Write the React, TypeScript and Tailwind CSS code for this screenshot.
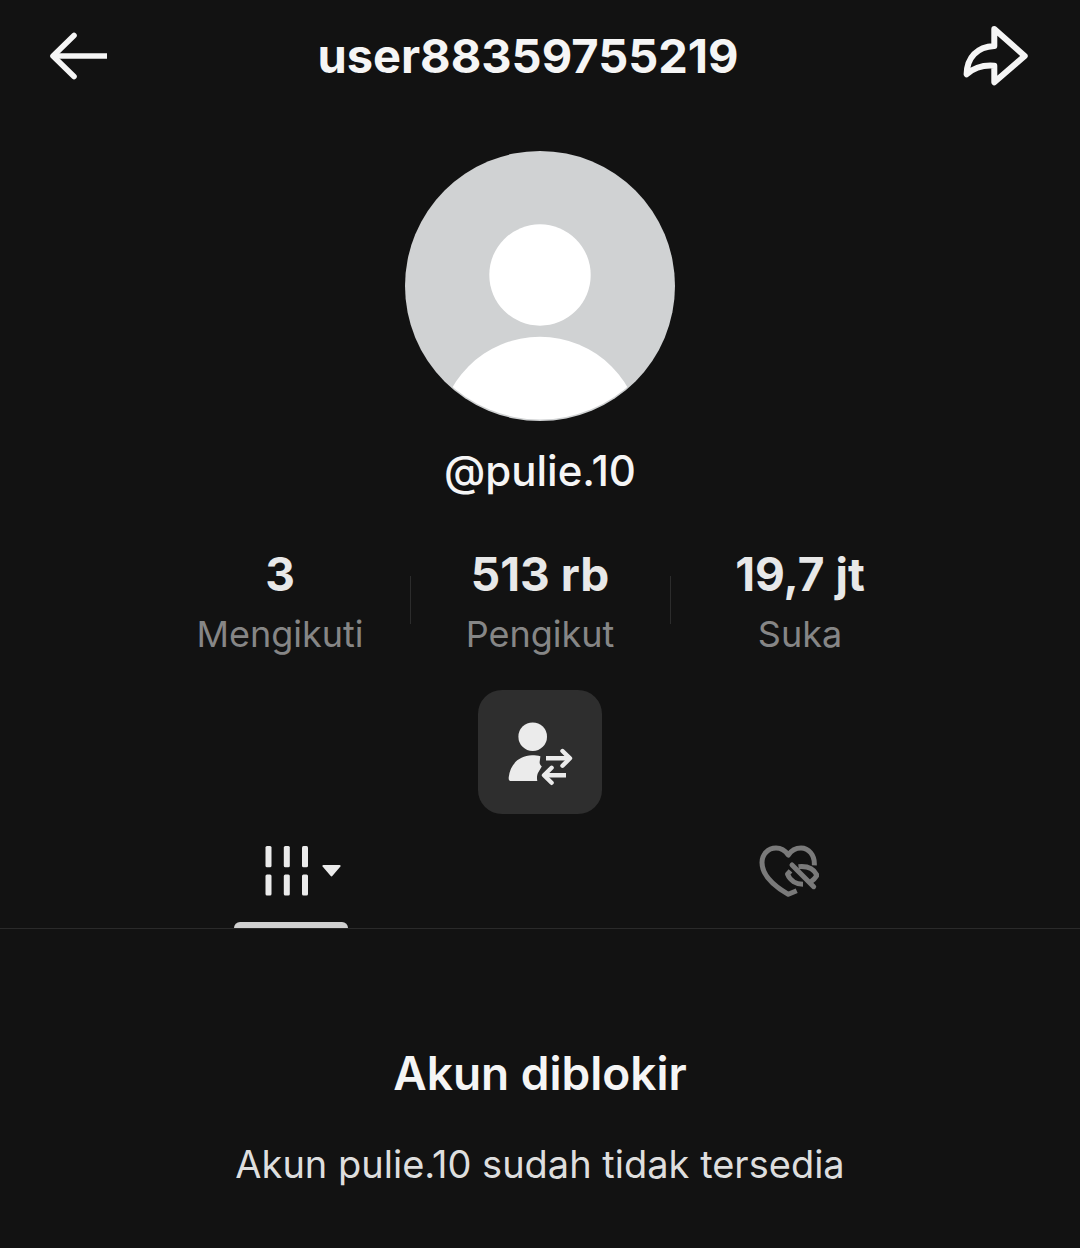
import { useState } from "react"

const stats = [
    { value: "3", label: "Mengikuti" },
    { value: "513 rb", label: "Pengikut" },
    { value: "19,7 jt", label: "Suka" },
]

function BackIcon() {
    return <svg width="60" height="60" viewBox="0 0 60 60" fill="none" stroke="currentColor" strokeWidth="5.6" strokeLinejoin="round" aria-hidden="true">
        <path d="M26 9.5 5 30l21 20.5" strokeLinecap="round" />
        <path d="M6 30h53" />
    </svg>
}

function ShareIcon() {
    return <svg width="68" height="64" viewBox="0 0 68 64" fill="none" stroke="currentColor" strokeWidth="6" strokeLinejoin="round" className="overflow-visible" aria-hidden="true">
        <path d="M30.3 5 60.7 32 30.3 58.3V41.7C19 40.8 10 43.6 2.6 50.3 3 33.5 13 22.8 30.3 22Z" />
    </svg>
}

function Avatar() {
    return <svg className="size-[270px]" viewBox="0 0 270 270" role="img" aria-label="pulie.10">
        <clipPath id="avatar">
            <circle cx="135" cy="135" r="133.5" />
        </clipPath>
        <circle cx="135" cy="135" r="135" fill="#d0d2d3" />
        <circle cx="135" cy="124" r="50.7" fill="#fff" />
        <circle cx="135" cy="287" r="101.2" fill="#fff" clipPath="url(#avatar)" />
    </svg>
}

function SuggestIcon() {
    return <svg width="64" height="64" viewBox="0 0 64 64" className="overflow-visible" aria-hidden="true">
        <circle cx="24.7" cy="16.7" r="14.3" fill="currentColor" />
        <path fill="currentColor" d="M24 35.3C11 35.5 2 44.5.7 57.5.5 60 1.3 61 3.5 61H29.3C28.6 57.5 29 54.5 30.5 52L33.8 46.5C32 45 31.3 43 31.8 41L32.4 36.2C30 35.5 27 35.3 24 35.3Z" />
        <g fill="none" stroke="currentColor" strokeWidth="4.4" strokeLinejoin="round">
            <path d="M38 38.3H61M58 55.3H37" />
            <path d="M54.5 31 62 38.3 54.5 45.7M43.6 47.8 36 55.3 43.6 62.8" strokeLinecap="round" />
        </g>
    </svg>
}

function GridIcon() {
    return <svg width="44" height="50" viewBox="0 0 44 50" fill="currentColor" aria-hidden="true">
        {[0.5, 18.8, 37].map(x => <g key={x}>
            <rect x={x} y="0" width="6" height="21.3" rx="1.5" />
            <rect x={x} y="28.5" width="6" height="21" rx="1.5" />
        </g>)}
    </svg>
}

function LikedIcon() {
    return <svg width="60" height="60" viewBox="0 0 60 60" fill="none" stroke="currentColor" strokeWidth="5" strokeLinejoin="round" aria-hidden="true">
        <path d="M55.3 24.3C56 14 49.5 7 42 7 36.5 7 32 10 29.3 14 26.5 10 22 7 17 7 9 7 3 13.5 3 21.5 3 34.5 15 45 29.3 53.3L37.7 49.7" />
        <path d="M33 24 54.7 45.7" strokeLinecap="round" />
        <path d="M31.5 29.8 28.5 33.2C31 39.5 37 43.2 44 43.2" />
        <path d="M39.5 25.7C48.5 24.8 55 28 58 34.3 56.5 37 54.5 39 51.5 41" />
    </svg>
}

export default function App() {
    const [tab, tabSet] = useState("videos")
    return <main className="min-h-screen bg-[#121212] font-['Inter',sans-serif] text-[#f5f5f5]">
        <header className="flex h-28 items-center px-12">
            <button type="button" aria-label="Kembali" className="flex w-[60px] items-center"><BackIcon /></button>
            <h1 className="flex-1 text-center text-[47px] leading-14 font-bold">user88359755219</h1>
            <button type="button" aria-label="Bagikan" className="flex w-[84px] items-center justify-end"><ShareIcon /></button>
        </header>

        <section className="flex flex-col items-center pt-[39px]">
            <Avatar />
            <p className="mt-6 text-[42px] leading-[52px] font-medium">@pulie.10</p>
            <ul className="mt-[47px] flex text-center">
                {stats.map((s, i) => <li key={s.label} className="flex">
                    {i > 0 && <span className="mt-8 h-12 w-px bg-[#2c2c2c]" />}
                    <a href="#" className="block w-[259px]">
                        <strong className="block text-[46px] leading-[60px] font-bold text-[#e8e8e8]">{s.value}</strong>
                        <span className="block text-[36px] leading-[60px] text-[#868686]">{s.label}</span>
                    </a>
                </li>)}
            </ul>
            <button type="button" aria-label="Akun yang disarankan" className="mt-[26px] flex size-[124px] items-center justify-center rounded-3xl bg-[#2e2e2e] text-[#ebebeb]">
                <SuggestIcon />
            </button>
        </section>

        <nav className="flex border-b border-[#2a2a2a] px-[42px]">
            <button type="button" aria-label="Video" onClick={() => tabSet("videos")} className="flex h-[114px] flex-1 flex-col items-center justify-end pt-[6px] text-[#ebebeb]">
                <span className="flex w-[114px] flex-1 items-center justify-end gap-[13px] pr-[7px]">
                    <GridIcon />
                    <svg width="19" height="12" viewBox="0 0 19 12" fill="currentColor" aria-hidden="true">
                        <path d="M1.5 0H17.5Q19.5.5 18 2L10.5 10.8Q9.5 12 8.5 10.8L1 2Q-.5.5 1.5 0Z" />
                    </svg>
                </span>
                <span className={tab === "videos" ? "h-[6px] w-[114px] rounded-t-md bg-[#d0d0d0]" : "h-[6px] w-[114px]"} />
            </button>
            <button type="button" aria-label="Disukai" onClick={() => tabSet("liked")} className="flex h-[114px] flex-1 flex-col items-center justify-end pt-[6px] text-[#7a7a7a]">
                <span className="flex flex-1 items-center"><LikedIcon /></span>
                <span className={tab === "liked" ? "h-[6px] w-[114px] rounded-t-md bg-[#d0d0d0]" : "h-[6px] w-[114px]"} />
            </button>
        </nav>

        <section className="px-12 pt-28 text-center">
            <h2 className="text-[46px] leading-[64px] font-semibold">Akun diblokir</h2>
            <p className="mt-[31px] text-[38px] leading-[56px] text-[#dedede]">Akun pulie.10 sudah tidak tersedia</p>
        </section>
    </main>
}
